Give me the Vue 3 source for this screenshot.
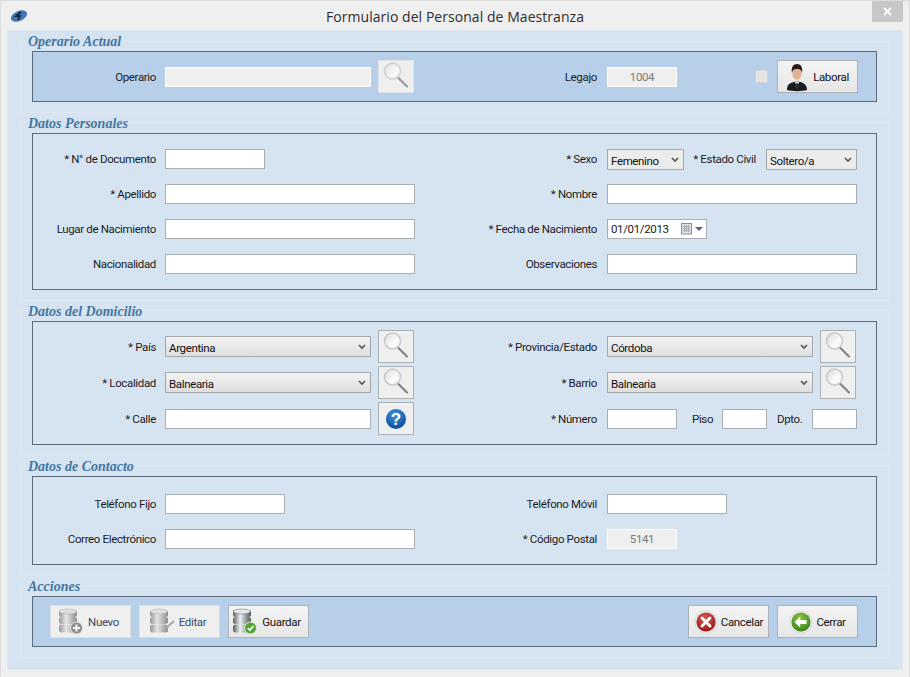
<template>
  <div class="window">
    <svg class="defs" width="0" height="0" aria-hidden="true">
      <defs>
        <linearGradient id="disc" x1="0" x2="1" y1="0" y2="0">
          <stop offset="0" stop-color="#979797" />
          <stop offset="0.4" stop-color="#e6e6e6" />
          <stop offset="1" stop-color="#8b8b8b" />
        </linearGradient>
        <linearGradient id="discColor" x1="0" x2="1" y1="0" y2="0">
          <stop offset="0" stop-color="#5a5e5f" />
          <stop offset="0.4" stop-color="#eef1f1" />
          <stop offset="1" stop-color="#4f5456" />
        </linearGradient>
        <linearGradient id="glass" x1="0" x2="1" y1="0" y2="1">
          <stop offset="0" stop-color="#d5d9dd" />
          <stop offset="0.6" stop-color="#fbfbfb" />
          <stop offset="1" stop-color="#f0f0f0" />
        </linearGradient>
        <radialGradient id="helpFill" cx="0.45" cy="0.3" r="0.8">
          <stop offset="0" stop-color="#3f94dc" />
          <stop offset="1" stop-color="#0b3f8c" />
        </radialGradient>
        <radialGradient id="redFill" cx="0.45" cy="0.3" r="0.8">
          <stop offset="0" stop-color="#d8534f" />
          <stop offset="1" stop-color="#8e1513" />
        </radialGradient>
        <radialGradient id="greenFill" cx="0.45" cy="0.3" r="0.8">
          <stop offset="0" stop-color="#8dc63f" />
          <stop offset="1" stop-color="#2d7a1a" />
        </radialGradient>
        <symbol id="lens" viewBox="0 0 36 33">
          <path d="M20 17.500 29 26.500" stroke="#858585" stroke-width="2.200" stroke-linecap="round" />
          <circle cx="14.500" cy="11" r="8" fill="url(#glass)" stroke="#cbcbcb" stroke-width="1.600" />
        </symbol>
        <symbol id="stack" viewBox="0 0 27 28">
          <rect x="1" y="9" width="18" height="7" rx="2.500" fill="url(#disc)" />
          <rect x="1" y="16.500" width="18" height="8" rx="2.500" fill="url(#disc)" />
          <rect x="1" y="2" width="18" height="7" rx="2.500" fill="url(#disc)" />
          <ellipse cx="10" cy="3.500" rx="8.500" ry="2.500" fill="#dedede" stroke="#aaa" stroke-width="0.500" />
        </symbol>
        <symbol id="stackColor" viewBox="0 0 27 28">
          <rect x="1" y="9" width="18" height="7" rx="2.500" fill="url(#discColor)" />
          <rect x="1" y="16.500" width="18" height="8" rx="2.500" fill="url(#discColor)" />
          <rect x="1" y="2" width="18" height="7" rx="2.500" fill="url(#discColor)" />
          <ellipse cx="10" cy="3.500" rx="8.500" ry="2.500" fill="#e4e7e7" stroke="#666" stroke-width="0.500" />
        </symbol>
      </defs>
    </svg>

    <header class="titlebar">
      <svg class="app-logo" width="18" height="14" viewBox="0 0 18 14">
        <ellipse cx="9" cy="7" rx="8.500" ry="5" transform="rotate(-24 9 7)" fill="#3f77b8" />
        <path d="M11 3 6 7h4l-2 4" fill="none" stroke="#16243a" stroke-width="1.800" />
      </svg>
      <span class="title">Formulario del Personal de Maestranza</span>
      <button class="close" type="button" aria-label="Cerrar ventana">
        <svg width="9" height="9" viewBox="0 0 9 9">
          <path d="M1 1l7 7M8 1 1 8" stroke="#fff" stroke-width="1.800" />
        </svg>
      </button>
    </header>

    <main class="panel">
      <fieldset class="group">
        <legend>Operario Actual</legend>
        <div class="box tinted tight">
          <div class="row">
            <div class="col-l">
              <label>Operario</label>
              <input class="w206 off" type="text" disabled />
              <button class="lookup" type="button"><svg width="36" height="33"><use href="#lens" /></svg></button>
            </div>
            <div class="col-r">
              <label>Legajo</label>
              <input class="w70 off centered" type="text" value="1004" disabled />
              <input class="check" type="checkbox" disabled />
              <button class="action" type="button">
                <svg width="24" height="30" viewBox="0 0 24 30">
                  <path d="M1 28c0-2 0-6 5-7.500L11 19l5 1.500c4 1.500 5 5 5 7.500-5 1.500-15 1.500-20 0z" fill="#1b1d20" />
                  <path d="M8.500 19.500 11 24l2.500-4.500z" fill="#f3f3f3" />
                  <path d="M10.300 21h1.400l.7 5-1.400 1-1.400-1z" fill="#33353a" />
                  <ellipse cx="11" cy="11" rx="4.700" ry="6.800" fill="#e2b393" />
                  <path d="M6 11c-1.200-6 1.500-9 5-9s6.200 3 5 9c-.6-3-1.500-4-5-4s-4.400 1-5 4z" fill="#2a1d16" />
                </svg>
                <span>Laboral</span>
              </button>
            </div>
          </div>
        </div>
      </fieldset>

      <fieldset class="group">
        <legend>Datos Personales</legend>
        <div class="box loose">
          <div class="row">
            <div class="col-l">
              <label>* N° de Documento</label>
              <input class="w100" type="text" />
            </div>
            <div class="col-r">
              <label>* Sexo</label>
              <div class="pick w77 flat">
                <select><option>Femenino</option></select>
                <svg class="chev" width="8" height="6" viewBox="0 0 8 6"><path d="M1 1l3 3 3-3" /></svg>
              </div>
              <label class="inline estado">* Estado Civil</label>
              <div class="pick w91 flat">
                <select><option>Soltero/a</option></select>
                <svg class="chev" width="8" height="6" viewBox="0 0 8 6"><path d="M1 1l3 3 3-3" /></svg>
              </div>
            </div>
          </div>
          <div class="row">
            <div class="col-l">
              <label>* Apellido</label>
              <input class="w250" type="text" />
            </div>
            <div class="col-r">
              <label>* Nombre</label>
              <input class="w250" type="text" />
            </div>
          </div>
          <div class="row">
            <div class="col-l">
              <label>Lugar de Nacimiento</label>
              <input class="w250" type="text" />
            </div>
            <div class="col-r">
              <label>* Fecha de Nacimiento</label>
              <div class="date">
                <span>01/01/2013</span>
                <svg width="22" height="12" viewBox="0 0 22 12">
                  <rect x="0.5" y="0.5" width="10" height="10.5" fill="#dfe2e6" stroke="#8b8f94" />
                  <path d="M2 3.500h7M2 5.500h7M2 7.500h7M3.500 2v7M5.500 2v7M7.500 2v7" stroke="#9ea3a9" stroke-width="0.800" />
                  <path d="M14 4h8l-4 4z" fill="#51648a" />
                </svg>
              </div>
            </div>
          </div>
          <div class="row">
            <div class="col-l">
              <label>Nacionalidad</label>
              <input class="w250" type="text" />
            </div>
            <div class="col-r">
              <label>Observaciones</label>
              <input class="w250" type="text" />
            </div>
          </div>
        </div>
      </fieldset>

      <fieldset class="group">
        <legend>Datos del Domicilio</legend>
        <div class="box stacked">
          <div class="row">
            <div class="col-l">
              <label>* País</label>
              <div class="pick w206">
                <select><option v-for="o in paises" :key="o">{{ o }}</option></select>
                <svg class="chev" width="8" height="6" viewBox="0 0 8 6"><path d="M1 1l3 3 3-3" /></svg>
              </div>
              <button class="lookup on" type="button"><svg width="36" height="33"><use href="#lens" /></svg></button>
            </div>
            <div class="col-r">
              <label>* Provincia/Estado</label>
              <div class="pick w206">
                <select><option>Córdoba</option></select>
                <svg class="chev" width="8" height="6" viewBox="0 0 8 6"><path d="M1 1l3 3 3-3" /></svg>
              </div>
              <button class="lookup on" type="button"><svg width="36" height="33"><use href="#lens" /></svg></button>
            </div>
          </div>
          <div class="row">
            <div class="col-l">
              <label>* Localidad</label>
              <div class="pick w206">
                <select><option>Balnearia</option></select>
                <svg class="chev" width="8" height="6" viewBox="0 0 8 6"><path d="M1 1l3 3 3-3" /></svg>
              </div>
              <button class="lookup on" type="button"><svg width="36" height="33"><use href="#lens" /></svg></button>
            </div>
            <div class="col-r">
              <label>* Barrio</label>
              <div class="pick w206">
                <select><option>Balnearia</option></select>
                <svg class="chev" width="8" height="6" viewBox="0 0 8 6"><path d="M1 1l3 3 3-3" /></svg>
              </div>
              <button class="lookup on" type="button"><svg width="36" height="33"><use href="#lens" /></svg></button>
            </div>
          </div>
          <div class="row">
            <div class="col-l">
              <label>* Calle</label>
              <input class="w206" type="text" />
              <button class="lookup on" type="button">
                <svg width="24" height="24" viewBox="0 0 24 24">
                  <circle cx="12" cy="12" r="11.500" fill="#e8eef5" />
                  <circle cx="12" cy="12" r="10" fill="url(#helpFill)" />
                  <text x="12" y="18" text-anchor="middle" class="help-mark">?</text>
                </svg>
              </button>
            </div>
            <div class="col-r">
              <label>* Número</label>
              <input class="w70" type="text" />
              <label class="inline piso">Piso</label>
              <input class="w45" type="text" />
              <label class="inline dpto">Dpto.</label>
              <input class="w45" type="text" />
            </div>
          </div>
        </div>
      </fieldset>

      <fieldset class="group">
        <legend>Datos de Contacto</legend>
        <div class="box contact">
          <div class="row">
            <div class="col-l">
              <label>Teléfono Fijo</label>
              <input class="w120" type="text" />
            </div>
            <div class="col-r">
              <label>Teléfono Móvil</label>
              <input class="w120" type="text" />
            </div>
          </div>
          <div class="row">
            <div class="col-l">
              <label>Correo Electrónico</label>
              <input class="w250" type="text" />
            </div>
            <div class="col-r">
              <label>* Código Postal</label>
              <input class="w70 off centered" type="text" value="5141" disabled />
            </div>
          </div>
        </div>
      </fieldset>

      <fieldset class="group">
        <legend>Acciones</legend>
        <div class="box tinted tight actions">
          <button class="action muted db" type="button">
            <svg width="27" height="28" viewBox="0 0 27 28">
              <use href="#stack" width="27" height="28" />
              <circle cx="18.500" cy="20" r="6" fill="#8e8e8e" stroke="#e6e6e6" />
              <path d="M18.500 16.500v7M15 20h7" stroke="#f4f4f4" stroke-width="2" />
            </svg>
            <span>Nuevo</span>
          </button>
          <button class="action muted db" type="button">
            <svg width="27" height="28" viewBox="0 0 27 28">
              <use href="#stack" width="27" height="28" />
              <path d="M14 23 25 13" stroke="#a8a8a8" stroke-width="2.200" />
            </svg>
            <span>Editar</span>
          </button>
          <button class="action db" type="button">
            <svg width="27" height="28" viewBox="0 0 27 28">
              <use href="#stackColor" width="27" height="28" />
              <circle cx="18.500" cy="20" r="6" fill="#4ea52f" stroke="#e6efe0" />
              <path d="M15.800 20l2 2.300 3.600-4.200" fill="none" stroke="#fff" stroke-width="1.700" />
            </svg>
            <span>Guardar</span>
          </button>
          <div class="spacer"></div>
          <button class="action" type="button">
            <svg width="24" height="24" viewBox="0 0 30 30">
              <circle cx="15" cy="15" r="14" fill="#ececec" stroke="#c8c8c8" stroke-width="0.600" />
              <circle cx="15" cy="15" r="12" fill="url(#redFill)" />
              <path d="M10 10l10 10M20 10 10 20" stroke="#fff" stroke-width="3.600" stroke-linecap="round" />
            </svg>
            <span>Cancelar</span>
          </button>
          <button class="action" type="button">
            <svg width="24" height="24" viewBox="0 0 30 30">
              <circle cx="15" cy="15" r="14" fill="#ececec" stroke="#c8c8c8" stroke-width="0.600" />
              <circle cx="15" cy="15" r="12" fill="url(#greenFill)" />
              <path d="M7 15l7-7v4.500h8v5h-8V22z" fill="#fff" />
            </svg>
            <span>Cerrar</span>
          </button>
        </div>
      </fieldset>
    </main>
  </div>
</template>

<script setup>
const paises = ['Argentina']
</script>

<style>
html,
body {
  margin: 0;
  background: #f0f0f0;
}
</style>

<style scoped>
.window {
  width: 910px;
  height: 677px;
  box-sizing: border-box;
  display: flex;
  flex-direction: column;
  background: #efefef;
  border: 1px solid #dcdcdc;
  border-bottom: 0;
  font-family: Roboto, 'Liberation Sans', Arial, sans-serif;
  font-size: 11.5px;
  letter-spacing: -0.35px;
  color: #1c1c1c;
}
.defs {
  position: absolute;
}
.titlebar {
  position: relative;
  height: 29px;
  flex: none;
  display: flex;
  align-items: center;
  justify-content: center;
}
.app-logo {
  position: absolute;
  left: 9px;
  top: 8px;
}
.title {
  font-family: 'Open Sans', sans-serif;
  font-size: 14px;
  letter-spacing: 0.05px;
  color: #2e2e2e;
  padding-top: 2px;
}
.close {
  position: absolute;
  right: 6px;
  top: 0;
  width: 31px;
  height: 21px;
  padding: 0;
  border: 0;
  background: #c7c7c7;
  display: flex;
  align-items: center;
  justify-content: center;
}
.panel {
  height: 640px;
  box-sizing: border-box;
  margin: 0 6px;
  padding: 2px 13px 0 12px;
  background: #d6e4f2;
  border: 1px solid #dfe7ef;
}
.group {
  margin: 0 0 1px;
  padding: 2px 11px 10px;
  border: 1px solid #dde8f3;
  min-width: 0;
}
.group + .group {
  padding-top: 3px;
}
legend {
  position: relative;
  top: 1px;
  margin-left: -5px;
  padding: 0 1px;
  font-family: 'Liberation Serif', serif;
  font-style: italic;
  font-weight: bold;
  font-size: 14px;
  line-height: 16px;
  letter-spacing: 0;
  color: #44769f;
}
.group + .group legend {
  top: 2px;
}
.box {
  border: 1px solid #5b6b7b;
  display: flex;
  flex-direction: column;
}
.tinted {
  background: #b8cfe9;
}
.tight {
  padding: 8px 0;
}
.loose {
  padding: 15px 0;
  gap: 15px;
}
.stacked {
  padding: 8px 0 9px;
  gap: 3px;
}
.contact {
  padding: 17px 0 15px;
  gap: 15px;
}
.row {
  display: flex;
  align-items: center;
}
.col-l,
.col-r {
  display: flex;
  align-items: center;
}
.col-l {
  width: 442px;
}
.col-r {
  flex: 1;
}
label {
  flex: none;
  text-align: right;
  white-space: nowrap;
}
.col-l > label {
  width: 123px;
  margin-right: 9px;
}
.col-r > label {
  width: 122px;
  margin-right: 10px;
}
.col-r > label.estado {
  width: 63px;
  margin-left: 9px;
}
.col-r > label.piso {
  width: 20px;
  margin-left: 15px;
}
.col-r > label.dpto {
  width: 25px;
  margin-left: 10px;
}
input[type='text'] {
  box-sizing: border-box;
  height: 20px;
  margin: 0;
  padding: 0 3px;
  border: 1px solid #a9afb5;
  background: #fff;
  font: inherit;
  letter-spacing: inherit;
  outline: none;
}
input.off {
  border-color: #fff;
  background: #efefef;
  color: #7a7a7a;
}
input.centered {
  text-align: center;
}
.w45 {
  width: 45px;
}
.w70 {
  width: 70px;
}
.w77 {
  width: 77px;
}
.w91 {
  width: 91px;
}
.w100 {
  width: 100px;
}
.w120 {
  width: 120px;
}
.w206 {
  width: 206px;
}
.w250 {
  width: 250px;
}
.lookup {
  flex: none;
  width: 36px;
  height: 33px;
  margin-left: 7px;
  padding: 0;
  box-sizing: border-box;
  border: 1px solid #dfe3e7;
  background: #efefef;
  display: flex;
  align-items: center;
  justify-content: center;
}
.lookup:not(.on) svg {
  opacity: 0.8;
}
.lookup.on {
  border-color: #acb1b6;
}
.lookup svg {
  flex: none;
}
.help-mark {
  font-family: 'Liberation Sans', sans-serif;
  font-weight: bold;
  font-size: 17px;
  fill: #fff;
}
.check {
  appearance: none;
  width: 13px;
  height: 13px;
  margin: 0 9px 0 auto;
  background: #e4e4e4;
  border: 1px solid #cfd3d8;
}
.pick {
  position: relative;
  flex: none;
  height: 21px;
}
.pick.flat {
  margin-bottom: -1px;
}
.pick select {
  appearance: none;
  width: 100%;
  height: 100%;
  margin: 0;
  padding: 3px 0 0 3px;
  border: 1px solid #a6a9ac;
  border-radius: 0;
  background: linear-gradient(#f3f3f3, #dedede);
  font: inherit;
  letter-spacing: inherit;
  color: #111;
  outline: none;
}
.pick.flat select {
  background: #ececec;
}
.chev {
  position: absolute;
  right: 5px;
  top: 8px;
  pointer-events: none;
}
.chev path {
  fill: none;
  stroke: #555;
  stroke-width: 1.600;
}
.date {
  box-sizing: border-box;
  width: 100px;
  height: 20px;
  padding: 0 3px;
  border: 1px solid #a9afb5;
  background: #fff;
  display: flex;
  align-items: center;
  justify-content: space-between;
}
.action {
  flex: none;
  box-sizing: border-box;
  width: 81px;
  height: 33px;
  padding: 0;
  border: 1px solid #acb1b6;
  background: linear-gradient(#f4f4f4, #e6e6e6);
  display: flex;
  align-items: center;
  justify-content: center;
  gap: 3px;
  font: inherit;
  letter-spacing: inherit;
  color: #111;
}
.action.db span {
  margin-right: 4px;
}
.action.muted {
  border-color: #d9dee3;
  background: #efefef;
  color: #3a4d66;
}
.col-r > .action {
  margin-right: 18px;
}
.actions {
  flex-direction: row;
  gap: 8px;
  padding-left: 17px;
  padding-right: 18px;
}
.spacer {
  flex: 1;
}
</style>
